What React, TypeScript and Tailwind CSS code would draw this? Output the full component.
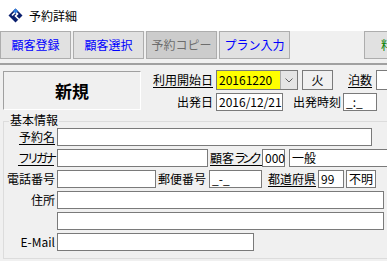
import React from "react";

const font = { fontFamily: '"Noto Sans CJK JP", "Liberation Sans", sans-serif' };

function Box({ className = "", children }: { className?: string; children?: React.ReactNode }) {
  return (
    <div className={`h-[18px] border border-[#7a7a7a] bg-white flex items-center px-[2px] text-[12px] leading-none ${className}`}>
      {children}
    </div>
  );
}

function Label({ className = "", u = false, children }: { className?: string; u?: boolean; children: React.ReactNode }) {
  return (
    <div className={`text-[12px] leading-none text-black whitespace-nowrap ${u ? "underline underline-offset-2" : ""} ${className}`}>
      {children}
    </div>
  );
}

function ToolButton({ children, color, disabled, className = "justify-center" }: { children: React.ReactNode; color: string; disabled?: boolean; className?: string }) {
  return (
    <div
      className={`w-[71px] h-[28px] shrink-0 border border-[#adadad] flex items-center text-[12px] ${disabled ? "bg-[#cccccc]" : "bg-[#e1e1e1]"} ${color} ${className}`}
    >
      {children}
    </div>
  );
}

export default function App() {
  return (
    <div className="w-[387px] h-[261px] overflow-hidden bg-[#f0f0f0] flex flex-col" style={font}>
      {/* title */}
      <div className="h-[31px] bg-white flex items-center pl-[8px] gap-[6px] shrink-0">
        <svg width="15" height="15" viewBox="0 0 15 15">
          <path d="M7.5 0.5 L14.5 7.5 L7.5 14.5 L0.5 7.5 Z" fill="#0a1f6e" />
          <path d="M4 7.5 L7.5 4 L9.5 6 L7.5 8 L11 11.5" stroke="#fff" strokeWidth="1.6" fill="none" />
          <path d="M7.5 0.5 L10 3 L7.5 5.5 L5 3 Z" fill="#2f7de0" />
        </svg>
        <span className="text-[12px] text-black">予約詳細</span>
      </div>
      {/* toolbar */}
      <div className="h-[32px] flex items-start gap-[2px] shrink-0">
        <ToolButton color="text-[#0000ff]">顧客登録</ToolButton>
        <ToolButton color="text-[#0000ff]">顧客選択</ToolButton>
        <ToolButton color="text-[#6d6d6d]" disabled>予約コピー</ToolButton>
        <ToolButton color="text-[#0000ff]">プラン入力</ToolButton>
        <div className="w-[70px] shrink-0" />
        <ToolButton color="text-[#008000]" className="justify-start pl-[16px]">料金</ToolButton>
      </div>
      <div className="h-[2px] bg-[#a0a0a0] shrink-0" />
      {/* header */}
      <div className="flex pl-[3px] pt-[5px] shrink-0">
        <div className="w-[138px] h-[39px] mt-[1px] border border-[#a0a0a0] border-b-white border-r-white flex items-center justify-center text-[17px] font-bold text-black shrink-0">
          新規
        </div>
        <div className="flex flex-col ml-[12px] gap-[3px]">
          <div className="flex items-center h-[20px]">
            <Label u className="w-[60px] text-right">利用開始日</Label>
            <div className="ml-[3px] w-[82px] h-[20px] border border-[#7a7a7a] flex">
              <div className="flex-1 bg-[#ffff00] flex items-center px-[2px] text-[12px]">20161220</div>
              <div className="w-[17px] bg-[#e5e5e5] border-l border-[#adadad] flex items-center justify-center">
                <svg width="8" height="5" viewBox="0 0 8 5"><path d="M0.5 0.5 L4 4 L7.5 0.5" stroke="#606060" fill="none" /></svg>
              </div>
            </div>
            <div className="ml-[4px] w-[31px] h-[20px] border border-[#7a7a7a] bg-[#f0f0f0] flex items-center justify-center text-[12px]">火</div>
            <Label u className="ml-[15px]">泊数</Label>
            <div className="ml-[4px] w-[30px] h-[20px] border border-[#7a7a7a] bg-white" />
          </div>
          <div className="flex items-center h-[18px]">
            <Label className="w-[60px] text-right">出発日</Label>
            <Box className="ml-[3px] w-[67px]">2016/12/21</Box>
            <Label className="ml-[10px]">出発時刻</Label>
            <Box className="ml-[2px] w-[34px]">_:_</Box>
          </div>
        </div>
      </div>
      {/* group */}
      <div className="relative mx-[3px] mt-[10px] h-[138px] border border-[#dcdcdc] mr-[-10px]">
        <div className="absolute left-[5px] top-[-8px] bg-[#f0f0f0] px-[1px] text-[12px] leading-none">基本情報</div>
        <div className="flex flex-col gap-[3px] pt-[6px]">
          <div className="flex items-center">
            <Label u className="w-[51px] text-right">予約名</Label>
            <Box className="ml-[2px] w-[315px]" />
          </div>
          <div className="flex items-center">
            <Label u className="w-[51px] text-right tracking-[-3px] pr-[1px]">フリガナ</Label>
            <Box className="ml-[2px] w-[151px]" />
            <Label u className="ml-[2px] w-[52px]">顧客<span className="tracking-[-4px]">ラン</span>ク</Label>
            <Box className="w-[23px]">000</Box>
            <Box className="ml-[4px] w-[100px] bg-[#f0f0f0]">一般</Box>
          </div>
          <div className="flex items-center">
            <Label className="w-[51px] text-right">電話番号</Label>
            <Box className="ml-[2px] w-[99px]" />
            <Label className="ml-[2px]">郵便番号</Label>
            <Box className="ml-[3px] w-[53px]">_-_</Box>
            <Label u className="ml-[6px]">都道府県</Label>
            <Box className="ml-[2px] w-[26px]">99</Box>
            <Box className="ml-[2px] w-[30px] bg-[#f0f0f0]">不明</Box>
          </div>
          <div className="flex items-center">
            <Label className="w-[51px] text-right">住所</Label>
            <Box className="ml-[2px] w-[327px]" />
          </div>
          <div className="flex items-center">
            <div className="w-[51px]" />
            <Box className="ml-[2px] w-[327px]" />
          </div>
          <div className="flex items-center">
            <Label className="w-[51px] text-right">E-Mail</Label>
            <Box className="ml-[2px] w-[197px]" />
          </div>
        </div>
      </div>
    </div>
  );
}
